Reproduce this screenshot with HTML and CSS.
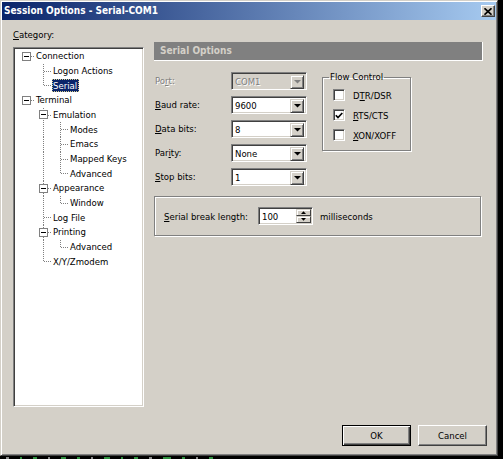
FILE: index.html
```html
<!DOCTYPE html>
<html>
<head>
<meta charset="utf-8">
<title>Session Options - Serial-COM1</title>
<link rel="stylesheet" href="styles.css">
</head>
<body>
<div class="desktop">
  <div class="window">
    <div class="titlebar">
      <span class="title">Session Options - Serial-COM1</span>
      <span class="close"><svg width="8" height="7" viewBox="0 0 8 7"><path d="M0.5 0.3 L7.5 6.7 M7.5 0.3 L0.5 6.7" stroke="#000" stroke-width="1.7" fill="none"/></svg></span>
    </div>
    <div class="client">
      <div class="main">
        <div class="left">
          <div class="cat-label"><u>C</u>ategory:</div>
          <div class="tree">
            <div class="row"><span class="c exp"><span class="box"></span></span><span class="t">Connection</span></div>
            <div class="row"><span class="c"></span><span class="c tee"></span><span class="t">Logon Actions</span></div>
            <div class="row"><span class="c"></span><span class="c ell"></span><span class="t sel">Serial</span></div>
            <div class="row"><span class="c exp"><span class="box"></span></span><span class="t">Terminal</span></div>
            <div class="row"><span class="c"></span><span class="c tee exp"><span class="box"></span></span><span class="t">Emulation</span></div>
            <div class="row"><span class="c"></span><span class="c pipe"></span><span class="c tee"></span><span class="t">Modes</span></div>
            <div class="row"><span class="c"></span><span class="c pipe"></span><span class="c tee"></span><span class="t">Emacs</span></div>
            <div class="row"><span class="c"></span><span class="c pipe"></span><span class="c tee"></span><span class="t">Mapped Keys</span></div>
            <div class="row"><span class="c"></span><span class="c pipe"></span><span class="c ell"></span><span class="t">Advanced</span></div>
            <div class="row"><span class="c"></span><span class="c tee exp"><span class="box"></span></span><span class="t">Appearance</span></div>
            <div class="row"><span class="c"></span><span class="c pipe"></span><span class="c ell"></span><span class="t">Window</span></div>
            <div class="row"><span class="c"></span><span class="c tee"></span><span class="t">Log File</span></div>
            <div class="row"><span class="c"></span><span class="c tee exp"><span class="box"></span></span><span class="t">Printing</span></div>
            <div class="row"><span class="c"></span><span class="c pipe"></span><span class="c ell"></span><span class="t">Advanced</span></div>
            <div class="row"><span class="c"></span><span class="c ell"></span><span class="t">X/Y/Zmodem</span></div>
          </div>
        </div>
        <div class="right">
          <div class="header">Serial Options</div>
          <div class="top">
            <div class="form">
              <label class="disabled-text">Po<u>r</u>t:</label>
              <div class="combo disabled"><span class="val">COM1</span><span class="drop"><svg width="7" height="4" viewBox="0 0 7 4"><polygon points="0,0 7,0 3.5,3.6" fill="#808080"/></svg></span></div>
              <label><u>B</u>aud rate:</label>
              <div class="combo"><span class="val">9600</span><span class="drop"><svg width="7" height="4" viewBox="0 0 7 4"><polygon points="0,0 7,0 3.5,3.6" fill="#000"/></svg></span></div>
              <label><u>D</u>ata bits:</label>
              <div class="combo"><span class="val">8</span><span class="drop"><svg width="7" height="4" viewBox="0 0 7 4"><polygon points="0,0 7,0 3.5,3.6" fill="#000"/></svg></span></div>
              <label>Par<u>i</u>ty:</label>
              <div class="combo"><span class="val">None</span><span class="drop"><svg width="7" height="4" viewBox="0 0 7 4"><polygon points="0,0 7,0 3.5,3.6" fill="#000"/></svg></span></div>
              <label><u>S</u>top bits:</label>
              <div class="combo"><span class="val">1</span><span class="drop"><svg width="7" height="4" viewBox="0 0 7 4"><polygon points="0,0 7,0 3.5,3.6" fill="#000"/></svg></span></div>
            </div>
            <fieldset class="flow">
              <legend>Flow Control</legend>
              <div class="chk"><span class="cb"></span><span>D<u>T</u>R/DSR</span></div>
              <div class="chk"><span class="cb"><svg width="8" height="7" viewBox="0 0 8 7"><path d="M0.8 3.2 L3 5.6 L7.3 1" stroke="#000" stroke-width="1.7" fill="none"/></svg></span><span><u>R</u>TS/CTS</span></div>
              <div class="chk"><span class="cb"></span><span><u>X</u>ON/XOFF</span></div>
            </fieldset>
          </div>
          <div class="break">
            <span class="break-label"><u>S</u>erial break length:</span>
            <div class="spin">
              <span class="val">100</span>
              <span class="spin-btns">
                <span class="sb"><svg width="5" height="3" viewBox="0 0 5 3"><polygon points="0,3 5,3 2.5,0.3" fill="#000"/></svg></span>
                <span class="sb"><svg width="5" height="3" viewBox="0 0 5 3"><polygon points="0,0 5,0 2.5,2.7" fill="#000"/></svg></span>
              </span>
            </div>
            <span class="ms">milliseconds</span>
          </div>
        </div>
      </div>
      <div class="footer">
        <button class="btn default">OK</button>
        <button class="btn">Cancel</button>
      </div>
    </div>
  </div>
  <div class="desk-strip">
    <span class="spec w" style="width:3px"></span><span class="spec g" style="width:2px"></span><span class="spec g" style="width:4px"></span><span class="spec w" style="width:2px"></span><span class="spec g" style="width:5px"></span><span class="spec g" style="width:3px"></span><span class="spec w" style="width:2px"></span><span class="spec g" style="width:6px"></span><span class="spec g" style="width:2px"></span><span class="spec g" style="width:4px"></span><span class="spec w" style="width:3px"></span><span class="spec g" style="width:8px"></span><span class="spec g" style="width:3px"></span><span class="spec w" style="width:2px"></span><span class="spec g" style="width:4px"></span>
  </div>
</div>
</body>
</html>
```
FILE: styles.css
```css
* { box-sizing: border-box; }
html, body { margin: 0; padding: 0; }
body {
  background: #000;
  font-family: "DejaVu Sans Condensed", "DejaVu Sans", sans-serif;
  font-stretch: condensed;
  font-size: 9.5px;
  color: #000;
}
u { text-decoration: underline; text-underline-offset: 1px; }

.desktop { width: 503px; height: 459px; overflow: hidden; }

.window {
  width: 498px;
  height: 456px;
  background: #d4d0c8;
  border: 1px solid;
  border-color: #d4d0c8 #404040 #404040 #d4d0c8;
  box-shadow: inset 1px 1px #fff, inset -1px -1px #808080;
  padding: 1px;
  display: flex;
  flex-direction: column;
}

.titlebar {
  height: 18px;
  flex: none;
  background: linear-gradient(to right, #0a246a, #a6caf0);
  display: flex;
  align-items: center;
  justify-content: space-between;
  padding: 0 1px 0 2px;
}
.title { color: #fff; font-weight: bold; font-size: 10px; line-height: 12px; }
.close {
  width: 14px;
  height: 12px;
  background: #d4d0c8;
  border: 1px solid;
  border-color: #fff #404040 #404040 #fff;
  box-shadow: inset -1px -1px #808080;
  display: flex;
  align-items: center;
  justify-content: center;
}

.client {
  flex: 1;
  display: flex;
  flex-direction: column;
  padding: 0 9px 8px 11px;
}
.main { display: flex; gap: 10px; }

.left { padding-top: 9px; width: 131px; flex: none; }
.cat-label { line-height: 12px; height: 12px; margin-bottom: 6px; }
.tree {
  height: 360px;
  background: #fff;
  border: 1px solid;
  border-color: #808080 #fff #fff #808080;
  box-shadow: inset 1px 1px #404040, inset -1px -1px #d4d0c8;
  padding: 1px 0 0 4px;
}
.row { display: flex; align-items: center; height: 14.67px; }
.c {
  width: 17px;
  height: 100%;
  flex: none;
  display: flex;
  align-items: center;
  justify-content: center;
  background-repeat: no-repeat;
}
.pipe {
  background-image: repeating-linear-gradient(to bottom, #808080 0 1px, transparent 1px 2px);
  background-size: 1px 100%;
  background-position: 8px 0;
}
.tee {
  background-image: repeating-linear-gradient(to bottom, #808080 0 1px, transparent 1px 2px),
                    repeating-linear-gradient(to right, #808080 0 1px, transparent 1px 2px);
  background-size: 1px 100%, 8px 1px;
  background-position: 8px 0, 9px 7px;
}
.ell {
  background-image: repeating-linear-gradient(to bottom, #808080 0 1px, transparent 1px 2px),
                    repeating-linear-gradient(to right, #808080 0 1px, transparent 1px 2px);
  background-size: 1px 8px, 8px 1px;
  background-position: 8px 0, 9px 7px;
}
.exp:not(.tee) {
  background-image: repeating-linear-gradient(to right, #808080 0 1px, transparent 1px 2px);
  background-size: 8px 1px;
  background-position: 9px 7px;
}
.box {
  width: 9px;
  height: 9px;
  border: 1px solid #808080;
  background: #fff;
  display: flex;
  align-items: center;
  justify-content: center;
}
.box::before { content: ""; width: 5px; height: 1px; background: #000; }
.t { line-height: 12px; padding: 0 2px 0 1px; white-space: nowrap; }
.t.sel { background: #0a246a; color: #fff; outline: 1px dotted #d8d090; outline-offset: -1px; height: 13px; line-height: 13px; }

.right { padding-top: 22px; width: 329px; flex: none; }
.header {
  height: 19px;
  background: #808080;
  border-right: 1px solid #fff;
  border-bottom: 1px solid #fff;
  color: #d4d0c8;
  font-weight: bold;
  font-size: 10px;
  line-height: 18px;
  padding-left: 6px;
}
.top { display: flex; align-items: flex-start; }
.form {
  display: grid;
  grid-template-columns: 77px 76px;
  grid-auto-rows: 18px;
  row-gap: 6px;
  margin-top: 11px;
}
.form label { align-self: center; line-height: 12px; padding-left: 1px; }
.disabled-text { color: #808080; text-shadow: 1px 1px #fff; }

.combo, .spin {
  height: 18px;
  border: 1px solid;
  border-color: #808080 #fff #fff #808080;
  box-shadow: inset 1px 1px #404040, inset -1px -1px #d4d0c8;
  background: #fff;
  display: flex;
  padding: 1px;
}
.combo { width: 76px; }
.combo .val, .spin .val { flex: 1; line-height: 14px; padding-left: 2px; padding-top: 1px; }
.combo.disabled { background: #d4d0c8; }
.combo.disabled .val { color: #808080; text-shadow: 1px 1px #fff; }
.drop {
  width: 14px;
  height: 14px;
  margin-top: 1px;
  margin-right: 1px;
  background: #d4d0c8;
  border: 1px solid;
  border-color: #d4d0c8 #404040 #404040 #d4d0c8;
  box-shadow: inset 1px 1px #fff, inset -1px -1px #808080;
  display: flex;
  align-items: center;
  justify-content: center;
}

.flow {
  margin: 10px 0 0 15px;
  width: 89px;
  min-width: 0;
  height: 80px;
  padding: 0 0 0 6px;
  border: 1px solid #808080;
  box-shadow: inset 1px 1px #fff, 1px 1px #fff;
}
.flow legend { padding: 0 1px; line-height: 12px; }
.chk { display: flex; align-items: center; height: 20px; margin-left: 4px; }
.chk:first-of-type { margin-top: 2px; }
.cb {
  width: 12px;
  height: 12px;
  flex: none;
  border: 1px solid;
  border-color: #808080 #fff #fff #808080;
  box-shadow: inset 1px 1px #404040, inset -1px -1px #d4d0c8;
  background: #fff;
  display: flex;
  align-items: center;
  justify-content: center;
  margin-right: 8px;
}

.break {
  margin-top: 10px;
  width: 327px;
  height: 40px;
  display: flex;
  align-items: center;
  padding-left: 9px;
  border: 1px solid #808080;
  box-shadow: inset 1px 1px #fff, 1px 1px #fff;
}
.break-label { width: 94px; flex: none; }
.spin { width: 55px; flex: none; }
.spin-btns { width: 15px; display: flex; flex-direction: column; }
.sb {
  height: 7px;
  flex: 1;
  background: #d4d0c8;
  border: 1px solid;
  border-color: #d4d0c8 #404040 #404040 #d4d0c8;
  box-shadow: inset 1px 1px #fff;
  display: flex;
  align-items: center;
  justify-content: center;
}
.ms { margin-left: 7px; }

.footer {
  margin-top: auto;
  display: flex;
  justify-content: flex-end;
  gap: 7px;
}
.btn {
  width: 69px;
  height: 21px;
  padding: 0;
  font: inherit;
  color: #000;
  background: #d4d0c8;
  border: 1px solid;
  border-color: #fff #404040 #404040 #fff;
  box-shadow: inset -1px -1px #808080;
}
.btn.default {
  border: 1px solid #000;
  box-shadow: inset 1px 1px #fff, inset -1px -1px #404040, inset -2px -2px #808080;
}

.desk-strip {
  height: 3px;
  display: flex;
  align-items: flex-end;
  gap: 11px;
  padding-left: 6px;
}
.spec { height: 2px; }
.spec.g { background: #2f8f3f; }
.spec.w { background: #8a8a8a; }
```
